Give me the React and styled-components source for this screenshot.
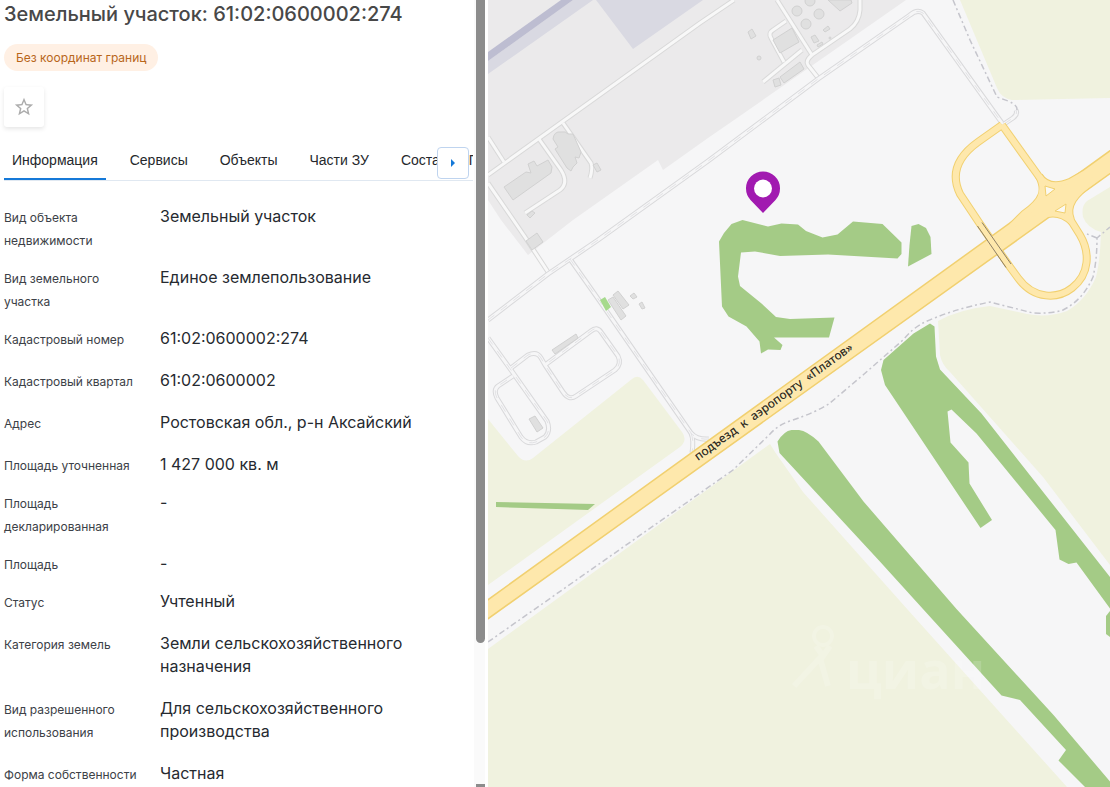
import React, { useState } from "react";
import styled, { createGlobalStyle } from "styled-components";
import { MdStarBorder } from "react-icons/md";

const GlobalStyle = createGlobalStyle`
  * {
    box-sizing: border-box;
  }
  body {
    margin: 0;
    background: #fff;
    font-family: Inter, sans-serif;
  }
`;

const Page = styled.div`
  display: flex;
  height: 100vh;
  overflow: hidden;
`;

const Sidebar = styled.aside`
  display: flex;
  flex: 0 0 488px;
  min-width: 0;
  padding-right: 3px;
  background: #fff;
`;

const Content = styled.div`
  flex: 1;
  min-width: 0;
  padding: 0 1px 0 4px;
  overflow: hidden;
`;

const ScrollTrack = styled.div`
  display: flex;
  flex: none;
  flex-direction: column;
  justify-content: space-between;
  width: 11px;
  padding-left: 2px;
  background: #fafafa;
`;

const ScrollThumb = styled.div`
  height: calc(100% - 144px);
  border-radius: 0 0 5px 5px;
  background: #8c8c8c;
`;

const ScrollEnd = styled.div`
  height: 3px;
  background: #8c8c8c;
`;

const Title = styled.h1`
  margin: 0;
  color: #484848;
  font-size: 20px;
  font-weight: 500;
  line-height: 28px;
  white-space: nowrap;
`;

const Badge = styled.span`
  display: block;
  width: fit-content;
  margin-top: 16px;
  padding: 0 12px;
  border-radius: 14px;
  background: #fff0e4;
  color: #b8661a;
  font-size: 12px;
  line-height: 27px;
`;

const StarButton = styled.button`
  display: flex;
  align-items: center;
  justify-content: center;
  width: 40px;
  height: 40px;
  margin-top: 16px;
  padding: 0;
  border: 0;
  border-radius: 3px;
  background: #fff;
  box-shadow: 0 2px 4px rgba(0, 0, 0, 0.1);
  color: #acacac;
`;

const TabBar = styled.div`
  position: relative;
  margin-top: 12px;
`;

const TabList = styled.div`
  display: flex;
  gap: 16px;
  overflow: hidden;
  border-bottom: 1px solid #e0e8f1;
`;

const Tab = styled.button`
  flex: none;
  height: 41px;
  padding: 2px 8px 0;
  border: 0;
  border-bottom: 2px solid ${(p) => (p.$active ? "#1579d8" : "transparent")};
  background: none;
  color: #25282c;
  font-family: "Liberation Sans", Arial, sans-serif;
  font-size: 14px;
  white-space: nowrap;
`;

const NextButton = styled.button`
  position: absolute;
  top: 8px;
  right: 4px;
  display: flex;
  align-items: center;
  justify-content: center;
  width: 32px;
  height: 32px;
  padding: 0;
  border: 1px solid #bfd4ef;
  border-radius: 4px;
  background: #fff;
`;

const Details = styled.dl`
  display: grid;
  gap: 14px;
  margin: 24px 0 0;
`;

const Row = styled.div`
  display: grid;
  grid-template-columns: 140px 1fr;
  column-gap: 16px;
  align-items: baseline;
`;

const Label = styled.dt`
  color: #3c4147;
  font-size: 12px;
  line-height: 23px;
`;

const Value = styled.dd`
  max-width: 264px;
  margin: 0;
  padding-bottom: ${(p) => (p.$plain ? 0 : 5)}px;
  color: #262a30;
  font-size: 16px;
  line-height: 23px;
`;

const MapArea = styled.main`
  flex: 1;
  min-width: 0;
  background: #f6f6f7;
`;

const MapSvg = styled.svg`
  display: block;
  width: 100%;
  height: 100%;
`;

const RoadLabel = styled.text`
  fill: #2f2b22;
  stroke: #fdebb5;
  stroke-width: 2px;
  paint-order: stroke;
  font-family: "Noto Sans", sans-serif;
  font-size: 12px;
  font-weight: 500;
`;

const Watermark = styled.text`
  fill: #fff;
  font-family: "Open Sans", sans-serif;
  font-size: 52px;
  font-weight: 700;
`;

const TABS = ["Информация", "Сервисы", "Объекты", "Части ЗУ", "Состав ЕЗП"];

const DETAILS = [
  { label: "Вид объекта недвижимости", value: "Земельный участок" },
  { label: "Вид земельного участка", value: "Единое землепользование" },
  { label: "Кадастровый номер", value: "61:02:0600002:274" },
  { label: "Кадастровый квартал", value: "61:02:0600002" },
  { label: "Адрес", value: "Ростовская обл., р-н Аксайский" },
  { label: "Площадь уточненная", value: "1 427 000 кв. м", plain: true },
  { label: "Площадь декларированная", value: "-", plain: true },
  { label: "Площадь", value: "-", plain: true },
  { label: "Статус", value: "Учтенный" },
  { label: "Категория земель", value: "Земли сельскохозяйственного назначения" },
  {
    label: "Вид разрешенного использования",
    value: "Для сельскохозяйственного производства",
  },
  { label: "Форма собственности", value: "Частная" },
];

const FIELDS = [
  "M960 0 L997 88 Q1001 98 1012 100 L1110 98 V0Z",
  "M1110 187 L1087 201 Q1081 206 1083 217 Q1087 228 1101 232 Q1100 262 1096 277 Q1086 300 1067 311 Q1048 318 1027 314 L990 306 Q960 309 938 321 L940 355 Q942 365 950 372 L1043 477 L1110 565Z",
  "M770 444 L775 452 L803 492 L908 610 L1067 787 H488 V649Z",
  "M488 419 L518 456 Q525 464 533 458 L632 379 Q638 374 643 380 L682 432 Q688 440 680 447 L488 585Z",
];

// service roads around the industrial zone
const SERVICE_ROADS = [
  "M488 175 L700 23 L734 0",
  "M488 137 L504 162",
  "M539 139 L561 170 Q569 183 560 190 L525 213",
  "M563 123 L591 163 Q593 168 590 178",
  "M488 183 L525 237 L548 272",
  "M777 0 L812 55",
  "M786 21 L773 30 Q768 33 771 38 L784 62",
  "M763 82 L802 50",
  "M860 0 V10 Q859 22 850 29 L812 55 Q805 61 808 65 L819 79",
];

const THIN_ROADS = [
  "M488 320 L548 274 L598 240 L708 161 L763 120 L818 79 L910 15 Q917 9 923 13 L1002 123",
  "M570 259 L601 303 L691 433 Q697 440 709 439",
  "M691 433 Q694 440 692 453",
  "M488 338 L511 370 L547 421 Q551 431 545 437 L536 442 Q527 445 521 437 L497 398 Q493 390 498 386 L513 376",
  "M511 368 L528 355 Q537 351 541 358 L545 365 L563 392 Q569 401 576 396 L615 370 Q622 364 618 356 L601 332 Q597 326 591 331 L545 365",
  "M1004 124 L1013 118 Q1018 114 1016 110",
];

const BUILDINGS = [
  "M504 187 L526 172 L531 173 L528 164 L534 161 L537 166 L548 160 L552 167 L551 173 L513 200Z",
  "M555 149 L558 147 L553 139 Q554 131 561 132 Q566 131 568 134 L573 134 L581 152 L579 158 L575 157 L577 163 L573 167 L571 171 L567 168Z",
  "M593 165 L597 163 L601 170 L597 172Z",
  "M527 215 L532 211 L535 213 L530 218Z",
  "M526 241 L537 233 L543 242 L532 250Z",
  "M748 32 L752 29 L756 36 L751 39Z",
  "M773 40 L792 28 L799 42 L780 53Z",
  "M780 77 L800 62 L804 69 L784 83Z",
  "M773 80 L779 78 L781 85 L775 87Z",
  "M811 37 L815 35 L819 41 L814 43Z",
  "M823 30 L828 26 L830 29 L825 32Z",
  "M817 45 L822 42 L823 44 L818 47Z",
  "M828 0 L840 11 L852 3 L851 0Z",
  "M613 295 L618 291 L629 305 L623 309Z",
  "M608 300 L613 297 L626 316 L621 320Z",
  "M630 296 L634 293 L637 297 L633 299Z",
  "M639 304 L642 302 L645 308 L642 309Z",
  "M552 350 L576 334 L578 338 L555 354Z",
  "M529 419 L535 416 L543 428 L537 432Z",
];

const TANKS = [
  [797, 11, 5],
  [810, 1, 5],
  [806, 24, 5],
  [819, 14, 5],
  [759, 58, 2],
  [830, 38, 1],
];

const WOODS = [
  "M719 241.500 L724 233 L731.500 224 L742.500 220 L768 226.500 L781.500 223.500 L798 224.500 L806 231 L822.500 237.500 L837.500 234.500 L853 221.500 L882.500 224 L901.500 242.500 V254 L897.500 258.500 L828 254.500 L780 256 L755 251.500 L741 252.500 L738 276.500 L740 286 L761.500 303.500 L776 317 L790 319 L834.500 317.500 L829 337.500 H774 L782.500 345 L780.500 350 L768 349.500 L761 353.500 L759.500 341.500 L746.500 326.500 L728.500 316.500 L722 306.500Z",
  "M911.500 226 L918.500 224 L926 228 L930.500 237 L931.500 254 L908 266.500 L909.500 245Z",
  "M930 323.500 L934.500 326.500 L936 356.500 L940 369.500 L981.500 413.500 L1110 577 V608.500 L1076.500 562.500 L1068.500 564 L1059.500 559.500 L1055.500 530 L976.500 433.500 L951.500 409.500 L947.500 411.500 L950.500 442.500 L968.500 462.500 L969.500 483.500 L992 520 L980.500 528 L885 385 L881 370 L883.500 360 L913.500 333.500Z",
  "M777.500 441.500 Q784 431 791.500 430 L799 430 Q807 431 818.500 441.500 L863.500 501.500 L956.500 609 L1053.500 715 L1110 781.500 V787 H1085 L1058.500 760.500 L1066 750 L1020 700 L1001.500 695.500 L878.500 560 L779.500 453Z",
  "M496 502 L595 504 L588 510 L496 507Z",
  "M1110 611 L1106 616 V634 L1110 637Z",
];

const PATHS = [
  "M488 642 L733 470 L770 434 Q778 425 790 421 Q817 412 830 403 L863 375 L903 340 Q913 328 923 323 Q950 310 990 302 L1033 313 Q1050 314 1063 310 Q1083 300 1093 277 Q1097 260 1097 238 L1110 227",
  "M1097 238 L1087 234",
  "M953 0 L970 40 L997 97 L1008 101 Q1020 106 1016 112",
];

const HIGHWAY = "M480 605.500 L1120 143.500 V166.500 L480 624.500Z";

const RAMPS = [
  "M1002 125 L978 142 Q946 165 960 194 L980 224 L1010 267 L1018 278 C1034 300 1058 299 1072 288 C1090 274 1090 252 1080 235 L1070 219",
  "M1002 125 L1040 178",
  "M1039 176 C1046 187 1058 187 1070 182 L1084 174",
  "M1039 176 C1046 190 1044 200 1024 214 L1012 226",
  "M1094 180 C1074 194 1065 206 1071 220",
  "M1016 231 L1028 224 C1042 213 1058 208 1072 222",
];

// paved area around the traffic islands
const JUNCTION = "M1041 182 L1050 187 L1068 184 L1084 184 L1070 204 L1068 216 L1048 216 L1036 206Z";

const ISLANDS = ["M1045 186 L1055 189 L1046 196Z", "M1055 211 L1066 204 L1065 213Z"];

const RegionMap = () => (
  <MapSvg
    viewBox="488 0 622 787"
    preserveAspectRatio="xMinYMin slice"
    role="img"
    aria-label="Карта участка"
  >
    <path
      d="M488 0 H906 L737 118 L708 138 L663 170 L658 160 L573 220 L528 255 L501 220 L488 200Z"
      fill="#ebeaeb"
    />
    <path d="M488 61 L573 0 H593 L488 74Z M596 0 H703 L633 49Z" fill="#d9d9e2" />
    <path d="M488 52 L561 0 H573 L488 61Z" fill="#bdbdd1" />
    <g fill="#f0f2df">
      {FIELDS.map((d) => (
        <path key={d} d={d} />
      ))}
    </g>

    <g fill="none" strokeLinejoin="round">
      <g stroke="#d9d9d9" strokeWidth="5">
        {SERVICE_ROADS.map((d) => (
          <path key={d} d={d} />
        ))}
      </g>
      <g stroke="#f8f8f8" strokeWidth="3">
        {SERVICE_ROADS.map((d) => (
          <path key={d} d={d} />
        ))}
      </g>
      <g stroke="#d9d9db" strokeWidth="5">
        {THIN_ROADS.map((d) => (
          <path key={d} d={d} />
        ))}
      </g>
      <g stroke="#f6f6f7" strokeWidth="3">
        {THIN_ROADS.map((d) => (
          <path key={d} d={d} />
        ))}
      </g>
      <g stroke="#e2e2e5" strokeWidth="1" strokeDasharray="8 8">
        {THIN_ROADS.map((d) => (
          <path key={d} d={d} />
        ))}
      </g>
    </g>

    <g fill="#e0e0e0" stroke="#d1d1d1">
      {BUILDINGS.map((d) => (
        <path key={d} d={d} />
      ))}
      {TANKS.map(([cx, cy, r]) => (
        <circle key={`${cx}-${cy}`} cx={cx} cy={cy} r={r} />
      ))}
    </g>
    <path d="M600 300 L605 297 L611 307 L606 311Z" fill="#a6da8d" />

    <g fill="#a4cb86">
      {WOODS.map((d) => (
        <path key={d} d={d} />
      ))}
    </g>
    <g fill="none" stroke="#c5c5cc" strokeWidth="1.5" strokeDasharray="6 3 2 3">
      {PATHS.map((d) => (
        <path key={d} d={d} />
      ))}
    </g>

    <g fill="none" stroke="#f1d070" strokeWidth="8">
      {RAMPS.map((d) => (
        <path key={d} d={d} />
      ))}
    </g>
    <path d={HIGHWAY} fill="#fee8ac" stroke="#f1d070" strokeWidth="1.5" />
    <g fill="none" stroke="#fee8ac" strokeWidth="6">
      {RAMPS.map((d) => (
        <path key={d} d={d} />
      ))}
    </g>
    <path d={JUNCTION} fill="#fee8ac" />
    <g fill="#fbf9f2" stroke="#f1d070">
      {ISLANDS.map((d) => (
        <path key={d} d={d} />
      ))}
    </g>
    <path
      d="M977.500 226 L1006 267.500 M982 222.500 L1011 264"
      fill="none"
      stroke="#8d7f66"
    />

    <RoadLabel transform="translate(698 461) rotate(-35.700)">
      {"подъезд\u00a0\u00a0к\u00a0\u00a0аэропорту\u00a0\u00a0«Платов»"}
    </RoadLabel>

    <g opacity="0.16">
      <Watermark x="846" y="689">
        циан
      </Watermark>
      <circle cx="823" cy="636" r="9" fill="none" stroke="#fff" strokeWidth="4" />
      <path
        d="M816 646 L823 656 L830 646 M794 686 L820 658 L828 686"
        fill="none"
        stroke="#fff"
        strokeWidth="6"
      />
    </g>

    <path
      d="M763 213 L750.500 200 A17 17 0 1 1 775.500 200Z"
      fill="#a11ab0"
    />
    <circle cx="763" cy="188.500" r="9" fill="#fff" />
  </MapSvg>
);

const App = () => {
  const [active, setActive] = useState(TABS[0]);

  return (
    <Page>
      <GlobalStyle />
      <Sidebar>
        <Content>
          <Title>Земельный участок: 61:02:0600002:274</Title>
          <Badge>Без координат границ</Badge>
          <StarButton type="button" aria-label="В избранное">
            <MdStarBorder size={22} />
          </StarButton>
          <TabBar>
            <TabList role="tablist">
              {TABS.map((tab) => (
                <Tab
                  key={tab}
                  type="button"
                  role="tab"
                  aria-selected={tab === active}
                  $active={tab === active}
                  onClick={() => setActive(tab)}
                >
                  {tab}
                </Tab>
              ))}
            </TabList>
            <NextButton type="button" aria-label="Следующие вкладки">
              <svg width="6" height="10" viewBox="0 0 6 10">
                <path d="M1 1 L5 5 L1 9Z" fill="#1579d8" />
              </svg>
            </NextButton>
          </TabBar>
          <Details>
            {DETAILS.map(({ label, value, plain }) => (
              <Row key={label}>
                <Label>{label}</Label>
                <Value $plain={plain}>{value}</Value>
              </Row>
            ))}
          </Details>
        </Content>
        <ScrollTrack aria-hidden="true">
          <ScrollThumb />
          <ScrollEnd />
        </ScrollTrack>
      </Sidebar>
      <MapArea>
        <RegionMap />
      </MapArea>
    </Page>
  );
};

export default App;
